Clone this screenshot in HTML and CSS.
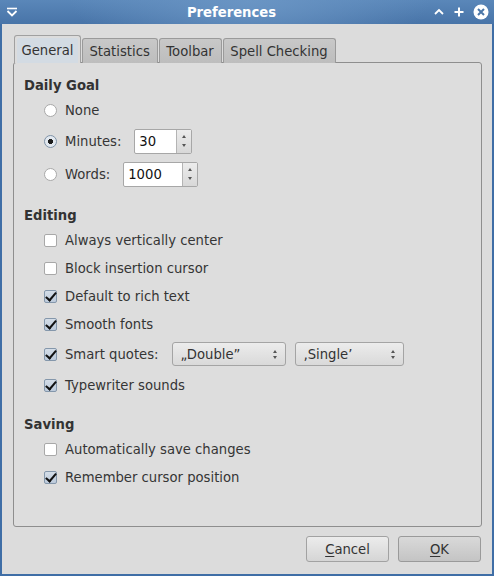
FILE: index.html
```
<!DOCTYPE html>
<html>
<head>
<meta charset="utf-8">
<link rel="stylesheet" href="styles.css">
</head>
<body>
<div class="window">
  <div class="titlebar">
    <svg class="tb-menu" width="12" height="12" viewBox="0 0 12 12"><path d="M1 2.5h10" stroke="#fff" stroke-width="1.6"/><path d="M1.5 5l4.5 4.5 4.5-4.5" fill="none" stroke="#fff" stroke-width="1.8"/></svg>
    <div class="title">Preferences</div>
    <div class="tb-buttons">
      <svg width="12" height="12" viewBox="0 0 12 12"><path d="M2 8l4-4 4 4" fill="none" stroke="#fff" stroke-width="1.8"/></svg>
      <svg width="12" height="12" viewBox="0 0 12 12"><path d="M6 1.5v9M1.5 6h9" stroke="#fff" stroke-width="2"/></svg>
      <svg width="16" height="16" viewBox="0 0 16 16"><circle cx="8" cy="8" r="7.5" fill="#fff"/><path d="M5 5l6 6M11 5l-6 6" stroke="#4a76a8" stroke-width="2"/></svg>
    </div>
  </div>
  <div class="body">
    <div class="tabs">
      <div class="tab active"><span>General</span></div>
      <div class="tab">Statistics</div>
      <div class="tab">Toolbar</div>
      <div class="tab">Spell Checking</div>
    </div>
    <div class="panel">
      <div class="heading">Daily Goal</div>
      <div class="row r28"><span class="radio"></span><span>None</span></div>
      <div class="row r34"><span class="radio on"></span><span class="lbl">Minutes:</span>
        <div class="spin w57"><span class="val">30</span><span class="arrows"><i class="up"></i><i class="dn"></i></span></div></div>
      <div class="row r32"><span class="radio"></span><span class="lbl">Words:</span>
        <div class="spin w75"><span class="val">1000</span><span class="arrows"><i class="up"></i><i class="dn"></i></span></div></div>

      <div class="heading sec">Editing</div>
      <div class="row r28"><span class="check"></span><span>Always vertically center</span></div>
      <div class="row r28"><span class="check"></span><span>Block insertion cursor</span></div>
      <div class="row r28"><span class="check on"></span><span>Default to rich text</span></div>
      <div class="row r28"><span class="check on"></span><span>Smooth fonts</span></div>
      <div class="row r32"><span class="check on"></span><span class="lbl2">Smart quotes:</span>
        <div class="combo w114"><span>„Double”</span><span class="arrows"><i class="up"></i><i class="dn"></i></span></div>
        <div class="combo w109"><span>‚Single’</span><span class="arrows"><i class="up"></i><i class="dn"></i></span></div></div>
      <div class="row r30"><span class="check on"></span><span>Typewriter sounds</span></div>

      <div class="heading sec2">Saving</div>
      <div class="row r28"><span class="check"></span><span>Automatically save changes</span></div>
      <div class="row r28"><span class="check on"></span><span>Remember cursor position</span></div>
    </div>
    <div class="buttons">
      <div class="btn"><u>C</u>ancel</div>
      <div class="btn ok"><u>O</u>K</div>
    </div>
  </div>
</div>
</body>
</html>
```
FILE: styles.css
```
html, body { margin: 0; padding: 0; }
body { font-family: "DejaVu Sans", sans-serif; font-size: 13.2px; color: #353535; background: #dcdcdc; }
.window { width: 494px; height: 576px; display: flex; flex-direction: column; }
.titlebar {
  height: 24px; flex: none; display: flex; align-items: center; position: relative;
  background: radial-gradient(ellipse 180px 60px at 250px 0px, #6a95c4, transparent), linear-gradient(#5a87b9, #4874a8);
  color: #fff;
}
.tb-menu { margin-left: 6px; }
.title { flex: 1; text-align: center; font-weight: bold; font-size: 13.2px; padding-left: 12px; }
.tb-buttons { display: flex; align-items: center; gap: 8px; margin-right: 5px; }
.body {
  flex: 1; display: flex; flex-direction: column;
  border: 2px solid #3f6ea6; border-top: 0;
  background: #dcdcdc; padding: 11px 10px 0 11px;
}
.tabs { display: flex; height: 28px; padding-left: 1px; align-items: flex-end; position: relative; z-index: 1; margin-bottom: -1px; }
.tab {
  height: 25px; box-sizing: border-box; padding: 0 7px 0 6.5px; display: flex; align-items: center;
  border: 1px solid #9a9a9a; border-bottom: 0; border-radius: 3px 3px 0 0;
  background: linear-gradient(#c8c8c8, #bdbdbd); color: #333; margin-right: 1px;
}
.tab.active {
  height: 28px; background: #dcdcdc; padding: 2px 2px 0 2px; align-items: stretch;
  border-color: #a0a0a0;
}
.tab.active span { display: flex; align-items: center; padding: 0 4.5px; background: #d3dbe3; border-radius: 2px 2px 0 0; }
.panel {
  height: 465px; box-sizing: border-box; border: 1px solid #8e8e8e; border-radius: 3px;
  background: #dddddd; padding: 11px 10px 0 10px;
}
.heading { height: 22px; display: flex; align-items: center; font-weight: bold; color: #333; }
.sec { margin-top: 14px; }
.sec2 { margin-top: 13px; }
.row { display: flex; align-items: center; padding-left: 20px; }
.r28 { height: 28px; } .r30 { height: 30px; } .r32 { height: 32px; } .r34 { height: 34px; }
.radio {
  width: 13px; height: 13px; border-radius: 50%; box-sizing: border-box; flex: none;
  border: 1px solid #a8a8a8; background: #fff; margin-right: 8px; position: relative;
}
.radio.on { background: radial-gradient(circle, #1d1d1d 0 2.3px, #e2e8ef 2.8px); border-color: #7f93a8; }
.check {
  width: 13px; height: 13px; box-sizing: border-box; flex: none; border: 1px solid #a8a8a8;
  background: #fff; border-radius: 2px; margin-right: 8px; position: relative;
}
.check.on { background: linear-gradient(#d4dde7, #bccadb); border-color: #8497ab; }
.check.on::after {
  content: ""; position: absolute; left: 3px; top: -1px; width: 4px; height: 9px;
  border: solid #111; border-width: 0 2.4px 2.4px 0; transform: rotate(40deg);
}
.lbl { margin-right: 13px; }
.lbl2 { margin-right: 14px; }
.spin {
  height: 25px; box-sizing: border-box; border: 1px solid #a7a7a7; border-radius: 2px;
  background: #fff; display: flex;
}
.w57 { width: 58px; } .w75 { width: 75px; }
.spin .val { flex: 1; display: flex; align-items: center; padding-left: 4px; color: #111; font-size: 13.2px; }
.spin .arrows {
  width: 14px; border-left: 1px solid #b4b4b4; background: linear-gradient(#ececec, #d8d8d8);
  display: flex; flex-direction: column; align-items: center; justify-content: center; gap: 6px;
}
i.up, i.dn { display: block; width: 0; height: 0; border-left: 2px solid transparent; border-right: 2px solid transparent; }
i.up { border-bottom: 3px solid #555; }
i.dn { border-top: 3px solid #555; }
.combo {
  height: 24px; box-sizing: border-box; border: 1px solid #a4a4a4; border-radius: 3px;
  background: linear-gradient(#ececec, #d9d9d9); display: flex; align-items: center;
  justify-content: space-between; padding: 0 8px 0 7px; margin-right: 9px; color: #333;
}
.combo .arrows { display: flex; flex-direction: column; gap: 3px; align-items: center; }
.w114 { width: 114px; } .w109 { width: 109px; }
.buttons { display: flex; justify-content: flex-end; gap: 9px; padding-top: 9px; margin-right: 1px; }
.btn {
  width: 83px; height: 26px; box-sizing: border-box; border: 1px solid #a2a2a2; border-radius: 3px;
  background: linear-gradient(#ececec, #d5d5d5); display: flex; align-items: center; justify-content: center; color: #333;
}
.btn.ok { background: linear-gradient(#d9d9d9, #c4c4c4); border-color: #9a9a9a; }
.btn u { text-decoration: underline; text-underline-offset: 2px; }
```
